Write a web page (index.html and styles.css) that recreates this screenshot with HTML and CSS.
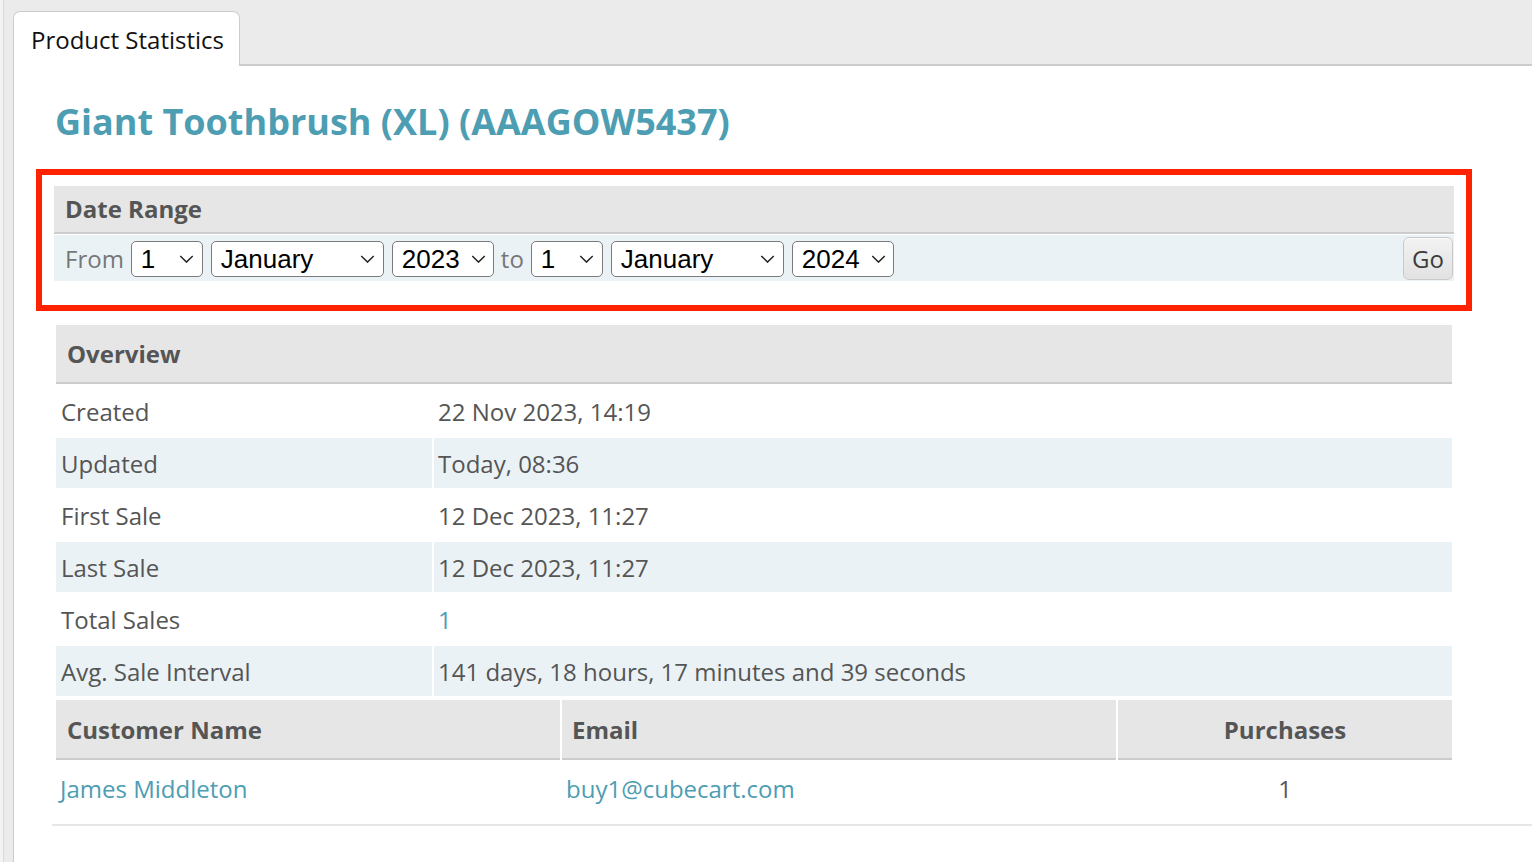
FILE: index.html
```html
<!DOCTYPE html>
<html lang="en">
<head>
<meta charset="utf-8">
<title>Product Statistics</title>
<link rel="stylesheet" href="styles.css">
</head>
<body>
<div class="app">
  <div class="edge"></div>
  <div class="main">
    <div class="tabbar">
      <div class="tab">Product Statistics</div>
    </div>
    <div class="panel">
      <h2 class="title">Giant Toothbrush (XL) (AAAGOW5437)</h2>
      <div class="highlight">
        <div class="fieldset">
          <div class="legend">Date Range</div>
          <div class="range-row">
            <span class="lbl">From</span>
            <div class="select w-day"><span>1</span><svg viewBox="0 0 16 9" class="chev"><path d="M1 1 L8 8 L15 1"/></svg></div>
            <div class="select w-month"><span>January</span><svg viewBox="0 0 16 9" class="chev"><path d="M1 1 L8 8 L15 1"/></svg></div>
            <div class="select w-year"><span>2023</span><svg viewBox="0 0 16 9" class="chev"><path d="M1 1 L8 8 L15 1"/></svg></div>
            <span class="lbl lbl-to">to</span>
            <div class="select w-day"><span>1</span><svg viewBox="0 0 16 9" class="chev"><path d="M1 1 L8 8 L15 1"/></svg></div>
            <div class="select w-month"><span>January</span><svg viewBox="0 0 16 9" class="chev"><path d="M1 1 L8 8 L15 1"/></svg></div>
            <div class="select w-year"><span>2024</span><svg viewBox="0 0 16 9" class="chev"><path d="M1 1 L8 8 L15 1"/></svg></div>
            <span class="spacer"></span>
            <button class="go" type="button">Go</button>
          </div>
        </div>
      </div>
      <div class="tables">
        <table class="grid overview">
          <thead>
            <tr><th colspan="2">Overview</th></tr>
          </thead>
          <tbody>
            <tr><td class="c1">Created</td><td>22 Nov 2023, 14:19</td></tr>
            <tr class="alt"><td class="c1">Updated</td><td>Today, 08:36</td></tr>
            <tr><td class="c1">First Sale</td><td>12 Dec 2023, 11:27</td></tr>
            <tr class="alt"><td class="c1">Last Sale</td><td>12 Dec 2023, 11:27</td></tr>
            <tr><td class="c1">Total Sales</td><td><a href="#" class="link">1</a></td></tr>
            <tr class="alt"><td class="c1">Avg. Sale Interval</td><td>141 days, 18 hours, 17 minutes and 39 seconds</td></tr>
          </tbody>
        </table>
        <table class="grid customers">
          <thead>
            <tr>
              <th class="cn">Customer Name</th>
              <th class="em">Email</th>
              <th class="pu">Purchases</th>
            </tr>
          </thead>
          <tbody>
            <tr>
              <td class="cn"><a href="#" class="link">James Middleton</a></td>
              <td class="em"><a href="#" class="link">buy1@cubecart.com</a></td>
              <td class="pu">1</td>
            </tr>
          </tbody>
        </table>
      </div>
      <div class="divider"></div>
    </div>
  </div>
</div>
</body>
</html>
```

FILE: styles.css
```css
* { box-sizing: border-box; }
html, body { margin: 0; padding: 0; height: 100%; }
body {
  font-family: "Open Sans", "Noto Sans", sans-serif;
  color: #555;
  background: #f3f3f3;
  overflow: hidden;
}
.app {
  display: flex;
  height: 862px;
}
.edge {
  width: 10px;
  margin-left: 3px;
  border-left: 1px solid #d9d9d9;
  background: #ebebeb;
}
.main {
  flex: 1;
  display: flex;
  flex-direction: column;
  min-width: 0;
}
.tabbar {
  height: 66px;
  padding-top: 11px;
  background: #ebebeb;
  border-bottom: 2px solid #cccccc;
  display: flex;
}
.tab {
  width: 227px;
  height: 55px;
  margin-bottom: -2px;
  padding: 12px 0 0 17px;
  background: #fff;
  border: 1px solid #cccccc;
  border-bottom: none;
  border-radius: 7px 7px 0 0;
  font-size: 24px;
  line-height: 32px;
  color: #111;
  position: relative;
}
.panel {
  flex: 1;
  background: #fff;
  border-left: 1px solid #cccccc;
  padding: 34px 0 0 22px;
}
.title {
  margin: 0 0 25px 19px;
  font-size: 36px;
  line-height: 44px;
  font-weight: 700;
  color: #4d9db3;
}
.highlight {
  width: 1436px;
  border: 6px solid #ff2200;
  padding: 11px 12px 24px 12px;
}
.fieldset {
  width: 1400px;
}
.legend {
  height: 48px;
  background: #e6e6e6;
  border-bottom: 2px solid #cccccc;
  padding-left: 11px;
  font-size: 24px;
  line-height: 46px;
  font-weight: 700;
  color: #555;
}
.range-row {
  margin-top: 1px;
  height: 46px;
  background: #ebf2f6;
  display: flex;
  align-items: center;
  padding: 1px 1px 0 11px;
}
.lbl {
  font-size: 24px;
  color: #777;
  line-height: 32px;
  margin-right: 7px;
}
.lbl-to {
  margin-left: -1px;
}
.select {
  height: 36px;
  border: 1.5px solid #7b7b7b;
  border-radius: 5px;
  background: #fff;
  display: flex;
  align-items: center;
  justify-content: space-between;
  padding: 1px 8px 0 9px;
  margin-right: 8px;
  font-family: "Liberation Sans", Arial, sans-serif;
  font-size: 26px;
  color: #000;
}
.w-day { width: 72px; }
.w-month { width: 173px; }
.w-year { width: 102px; padding-right: 7px; }
.w-year span { margin-right: 6px; }
.chev {
  width: 15px;
  height: 8px;
  fill: none;
  stroke: #222;
  stroke-width: 1.6;
}
.spacer { flex: 1; }
.go {
  width: 50px;
  height: 43px;
  margin-top: -1px;
  border: 1px solid #c9c9c9;
  border-radius: 6px;
  background: linear-gradient(#f2f2f2, #e2e2e2);
  box-shadow: inset 0 1px 0 #fafafa;
  font-family: "Open Sans", sans-serif;
  font-size: 24px;
  color: #3c3c3c;
  padding: 0;
}
.tables {
  margin: 12px 0 0 18px;
  width: 1400px;
}
.grid {
  width: 1400px;
  border-collapse: separate;
  border-spacing: 2px;
  font-size: 24px;
  color: #555;
}
.grid th {
  background: #e6e6e6;
  border-bottom: 2px solid #cccccc;
  text-align: left;
  font-weight: 700;
  padding: 0 11px;
  line-height: 57px;
}
.grid td {
  padding: 2px 4px 0 4px;
  line-height: 48px;
}
.overview td.c1 { width: 376px; padding-left: 5px; }
.grid tr.alt td { background: #ebf2f6; }
.customers th { padding-top: 1px; line-height: 57px; }
.customers td { line-height: 50px; }
.customers .cn { width: 504px; }
.customers .em { width: 554px; }
.customers th.em { padding-left: 10px; }
.customers td.em { padding-left: 4px; }
.customers .pu { text-align: center; }
.link {
  color: #4d9db3;
  text-decoration: none;
}
.divider {
  margin: 8px 0 0 16px;
  border-top: 2px solid #e6e6e6;
}
```
